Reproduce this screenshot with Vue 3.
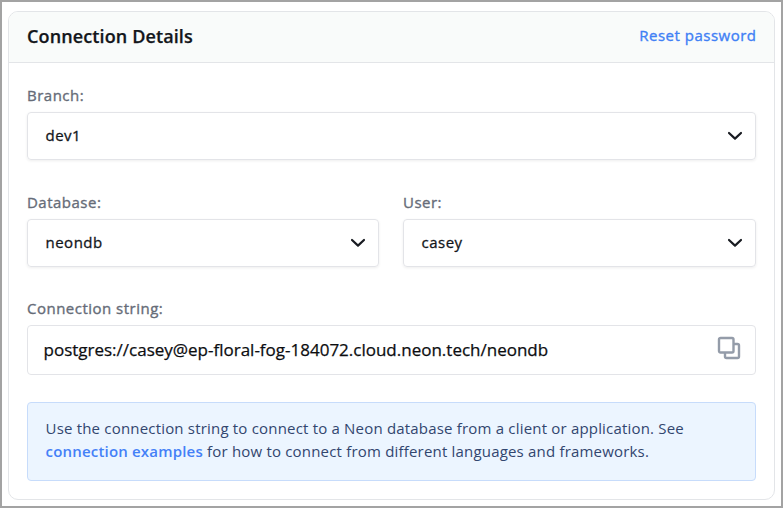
<script setup>
import { ref } from 'vue'

const branch = { label: 'Branch:', value: 'dev1' }
const pair = [
  { label: 'Database:', value: 'neondb' },
  { label: 'User:', value: 'casey' },
]
const connectionString = ref('postgres://casey@ep-floral-fog-184072.cloud.neon.tech/neondb')
</script>

<template>
  <main class="frame">
    <section class="card">
      <header class="head">
        <h2 class="title">Connection Details</h2>
        <a class="reset">Reset password</a>
      </header>
      <div class="body">
        <div class="field">
          <label class="label">{{ branch.label }}</label>
          <div class="select">
            <span class="value">{{ branch.value }}</span>
            <svg class="chevron" viewBox="0 0 16 10"><path d="M2 2l6 5.6L14 2" /></svg>
          </div>
        </div>
        <div class="row">
          <div v-for="item in pair" :key="item.label" class="field">
            <label class="label">{{ item.label }}</label>
            <div class="select">
              <span class="value">{{ item.value }}</span>
              <svg class="chevron" viewBox="0 0 16 10"><path d="M2 2l6 5.6L14 2" /></svg>
            </div>
          </div>
        </div>
        <div class="field last">
          <label class="label">Connection string:</label>
          <div class="copybox">
            <span class="conn">{{ connectionString }}</span>
            <svg class="copy" viewBox="0 0 24 24">
              <rect x="2" y="2" width="14.500" height="14.500" rx="1.5" />
              <path d="M16.500 8h4A1.5 1.5 0 0 1 22 9.500V20.500A1.500 1.500 0 0 1 20.500 22H9.500A1.500 1.500 0 0 1 8 20.500V16.500" />
            </svg>
          </div>
        </div>
        <p class="note">
          <span>Use the connection string to connect to a Neon database from a client or application. See</span><br />
          <a class="link">connection examples</a><span> for how to connect from different languages and frameworks.</span>
        </p>
      </div>
    </section>
  </main>
</template>

<style>
body {
  margin: 0;
  background: #fff;
}
</style>

<style scoped>
.frame,
.frame * {
  box-sizing: border-box;
}
.frame {
  width: 783px;
  height: 508px;
  border: 2px solid #a3a3a3;
  padding: 9px 6px 6px;
  font-family: "Open Sans", "Noto Sans", sans-serif;
  color: #13161b;
}
.card {
  height: 489px;
  border: 1px solid #e3e5e8;
  border-radius: 10px;
  overflow: hidden;
}
.head {
  display: flex;
  align-items: center;
  justify-content: space-between;
  height: 51px;
  padding: 0 18px;
  background: #f9fbfa;
  border-bottom: 1px solid #e3e5e8;
}
.title {
  margin: 0 0 2px;
  font-size: 18px;
  font-weight: 600;
  letter-spacing: 0.12px;
  line-height: 24px;
  -webkit-text-stroke: 0.25px currentColor;
}
.reset {
  font-size: 15px;
  font-weight: 500;
  letter-spacing: 0.5px;
  line-height: 20px;
  margin: 0 -0.5px 4px 0;
  color: #4080f5;
  -webkit-text-stroke: 0.35px currentColor;
}
.body {
  padding: 22px 18px 0;
}
.row {
  display: grid;
  grid-template-columns: 352px 353px;
  column-gap: 24px;
}
.field {
  height: 107px;
}
.last {
  height: 104px;
}
.row .field {
  height: 106px;
}
.label {
  display: block;
  height: 27px;
  line-height: 20px;
  font-size: 15px;
  font-weight: 500;
  letter-spacing: 0.49px;
  color: #666c78;
  -webkit-text-stroke: 0.35px currentColor;
}
.select {
  display: flex;
  align-items: center;
  justify-content: space-between;
  height: 48px;
  padding: 0 12px 0 17.5px;
  border: 1px solid #e3e4e8;
  border-radius: 4px;
  box-shadow: 0 1px 3px rgba(0, 0, 0, 0.07);
}
.value {
  font-size: 15px;
  font-weight: 500;
  letter-spacing: 0.5px;
  line-height: 20px;
  margin-bottom: 2px;
  -webkit-text-stroke: 0.3px currentColor;
}
.chevron {
  width: 16px;
  height: 10px;
  fill: none;
  stroke: #191c22;
  stroke-width: 2.2;
  stroke-linecap: round;
  stroke-linejoin: round;
}
.copybox {
  display: flex;
  align-items: center;
  justify-content: space-between;
  height: 50px;
  padding: 0 14px 0 15.5px;
  border: 1px solid #e3e4e8;
  border-radius: 4px;
}
.conn {
  font-size: 17px;
  font-weight: 500;
  line-height: 22px;
  white-space: nowrap;
  color: #0c0d10;
  -webkit-text-stroke: 0.25px currentColor;
}
.copy {
  width: 24px;
  height: 24px;
  margin-bottom: 4px;
  fill: none;
  stroke: #949ca9;
  stroke-width: 2.4;
}
.note {
  height: 79px;
  margin: 0;
  padding: 14px 17.5px;
  border: 1px solid #c7dcfb;
  border-radius: 4px;
  background: #ecf5ff;
  color: #32466f;
  font-size: 15px;
  letter-spacing: 0.19px;
  line-height: 23px;
  white-space: nowrap;
}
.link {
  font-weight: 600;
  color: #4480f7;
}
</style>
